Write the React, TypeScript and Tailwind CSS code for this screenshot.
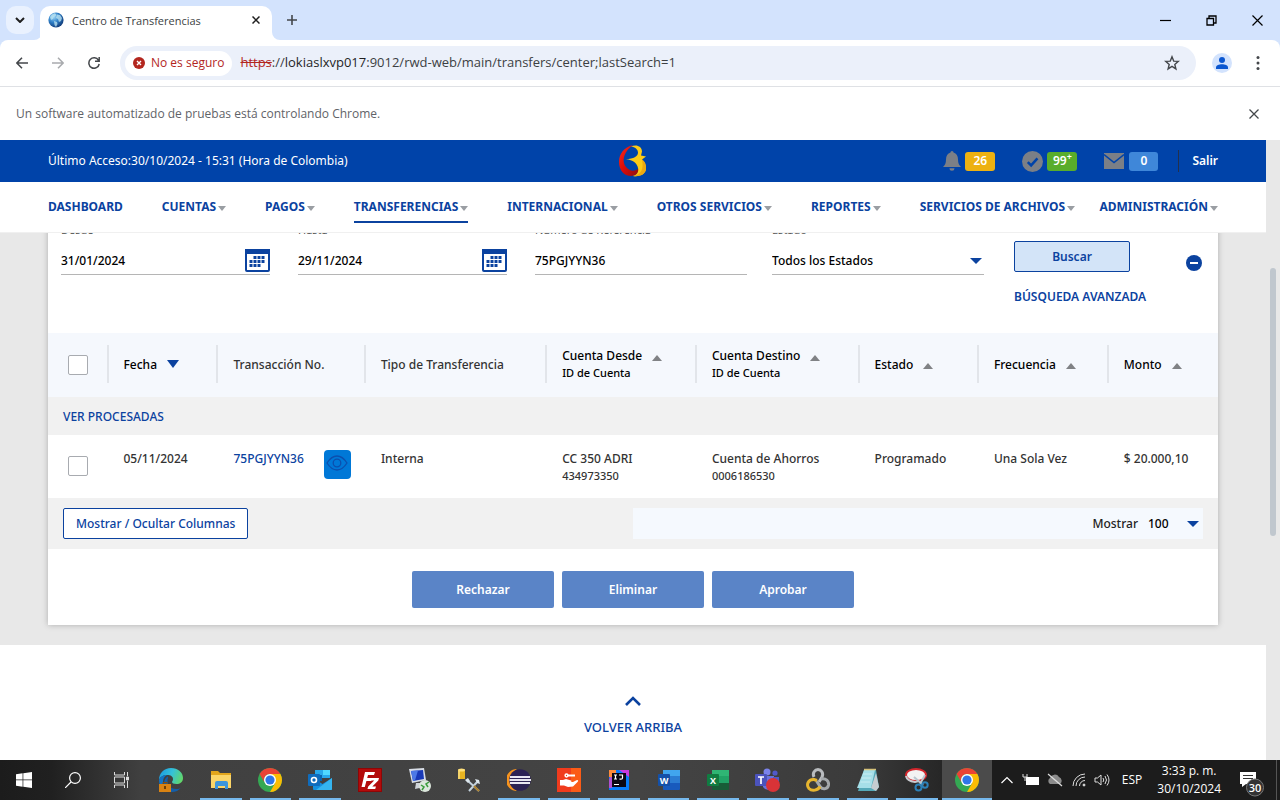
import type { ReactNode } from "react";

const navItems = ["CUENTAS", "PAGOS", "TRANSFERENCIAS", "INTERNACIONAL", "OTROS SERVICIOS", "REPORTES", "SERVICIOS DE ARCHIVOS"];

function Triangle({ up = false, className }: { up?: boolean; className: string }) {
  return (
    <svg viewBox="0 0 10 6" preserveAspectRatio="none" className={className} fill="currentColor" aria-hidden="true">
      <path d={up ? "M0 6 5 0l5 6z" : "M0 0h10L5 6z"} />
    </svg>
  );
}

function GlobeIcon() {
  return (
    <svg viewBox="0 0 16 16" className="size-4" aria-hidden="true">
      <defs>
        <radialGradient id="globe" cx="0.35" cy="0.3" r="0.8">
          <stop offset="0" stopColor="#9fd8f7" />
          <stop offset="0.45" stopColor="#2f80c8" />
          <stop offset="1" stopColor="#0c2f6b" />
        </radialGradient>
      </defs>
      <circle cx="8" cy="8" r="7.6" fill="url(#globe)" />
      <path d="M2 5c1-2 3-3.600 5-3.800L8.500 3 7 4.500 5.500 5 5 7 3 8zM9 2.500l3 .5 2 3-1 3-2 1-1-3-2-1zM6 9l3 1 .5 2L8 15l-1.500-2z" fill="#bfe5f2" opacity=".75" />
    </svg>
  );
}

function ChromeLogo() {
  return (
    <svg viewBox="0 0 24 24" className="size-6" aria-hidden="true">
      <circle cx="12" cy="12" r="12" fill="#34a853" />
      <path d="M12 6H22.390A12 12 0 0 1 12 24l5.200-9z" fill="#fbbc04" />
      <path d="M1.610 6A12 12 0 0 1 22.390 6H12a6 6 0 0 0-5.200 9z" fill="#ea4335" />
      <circle cx="12" cy="12" r="6" fill="#fff" />
      <circle cx="12" cy="12" r="4.600" fill="#2f76e8" />
    </svg>
  );
}

function OfficeLogo({ letter, tones }: { letter: string; tones: [string, string, string, string] }) {
  return (
    <svg viewBox="0 0 24 24" className="size-6" aria-hidden="true">
      <path d="M6 2h17v6H6z" fill={tones[0]} />
      <path d="M6 8h17v7H6z" fill={tones[1]} />
      <path d="M6 15h17v6a1 1 0 0 1-1 1H7a1 1 0 0 1-1-1z" fill={tones[2]} />
      <rect x="1" y="6" width="12" height="12" rx="1" fill={tones[3]} />
      <text x="7" y="15.500" textAnchor="middle" fontFamily="Open Sans" fontWeight="700" fontSize="9" fill="#fff">{letter}</text>
    </svg>
  );
}

const iconEdge = (
  <svg viewBox="0 0 24 24" className="size-6" aria-hidden="true">
    <defs>
      <linearGradient id="edgeTop" x1="0" x2="1" y1="0.300" y2="0.600">
        <stop offset="0" stopColor="#1b9de2" />
        <stop offset="0.500" stopColor="#35c1d8" />
        <stop offset="1" stopColor="#62d769" />
      </linearGradient>
    </defs>
    <path d="M0 12C0 5 5 0 12 0s12 4.500 12 10c0 4-3 6-6.500 6-3 0-4.500-1-4.500-2 0-.8 1-1 1-3 0-2.500-2.500-4-5.500-4C4 7 1 9 0 12z" fill="url(#edgeTop)" />
    <path d="M0 12c1-3 4-5 8-5-3 1.500-4 4-4 7 0 5 4 9 9 9.500C5 25 0 19 0 12z" fill="#1272c4" />
    <path d="M8.500 13c0 5 4 8 8.500 8 2 0 4-.5 5-1.500-2 3-5.500 4.500-9 4.500-5 0-8-4-8-8 0-3 1-6 3.500-7.500C10 9 8.500 10.500 8.500 13z" fill="#145ea8" />
    <rect x="0" y="16" width="12" height="8" fill="#d98313" />
    <path d="M4 16v-1.500h4V16" fill="none" stroke="#8a4f06" />
    <rect x="5" y="18" width="2" height="3" fill="#6e3f06" />
  </svg>
);

const iconFolder = (
  <svg viewBox="0 0 24 24" className="size-6" aria-hidden="true">
    <path d="M2 3h7l2 2h11v4H2z" fill="#e2a51c" />
    <path d="M2 7h20v13H2z" fill="#fbd568" />
    <path d="M6 21v-6a2 2 0 0 1 2-2h9a2 2 0 0 1 2 2v6h-3v-3H9v3z" fill="#3d96dc" />
  </svg>
);

const iconOutlook = (
  <svg viewBox="0 0 24 24" className="size-6" aria-hidden="true">
    <path d="M7 2h15v8H7z" fill="#28a8ea" />
    <path d="M15 2h7v5h-7z" fill="#50d9ff" />
    <path d="M7 7h7v6H7z" fill="#0a64ad" />
    <path d="M5 10l9.500 6L24 10v11a1 1 0 0 1-1 1H6a1 1 0 0 1-1-1z" fill="#1490df" />
    <path d="M24 10v11a1 1 0 0 1-1 1H8z" fill="#35b5f0" />
    <rect y="6" width="12" height="12" rx="1" fill="#0f6cbd" />
    <circle cx="6" cy="12" r="2.500" fill="none" stroke="#fff" strokeWidth="1.600" />
  </svg>
);

const iconFileZilla = (
  <svg viewBox="0 0 24 24" className="size-6" aria-hidden="true">
    <rect width="24" height="24" fill="#b30b0b" />
    <rect x=".5" y=".5" width="23" height="23" fill="none" stroke="#8e0606" />
    <path d="M7 4h10l-1 3h-6l-.8 3H14l-.8 3H8.400l-1.600 6H3.500z" fill="#fff" />
    <path d="M12 10h9l-.7 2.500-6 6H18l-.8 2.500H9.500l.7-2.500 6-6H11.500z" fill="#fff" />
  </svg>
);

const iconRemote = (
  <svg viewBox="0 0 24 24" className="size-6" aria-hidden="true">
    <path d="M1 1l15-1 2 12-14 3z" fill="#d8dde6" />
    <path d="M3 3l12-1 1 9-11 2z" fill="#1939b7" />
    <path d="M3 3l7-.6L7 12.600 5 13z" fill="#4d79e6" />
    <path d="M8 15h5l3 4-9 2z" fill="#cfd4d9" />
    <circle cx="17" cy="18" r="6" fill="#dce6dc" />
    <path d="m13 17 3 2-2 3M21 14l-3 2 2 3" fill="none" stroke="#3b9c3b" strokeWidth="1.500" />
  </svg>
);

const iconTools = (
  <svg viewBox="0 0 24 24" className="size-6" aria-hidden="true">
    <path d="M1 2h7v9H1z" fill="#e8b421" />
    <ellipse cx="4.500" cy="2" rx="3.500" ry="1.500" fill="#ffe07a" />
    <path d="M2 3v8" stroke="#fff0b0" />
    <path d="m10 12 12 11M12 23l9-10" stroke="#c4d2dc" strokeWidth="2" />
    <path d="M8 12l3-2 2 3-2 2zM18 11l4 1 1 4-3-1z" fill="#dce6ec" />
    <path d="m17 18 5 5" stroke="#a97f2c" strokeWidth="2" />
  </svg>
);

const iconEclipse = (
  <svg viewBox="0 0 24 24" className="size-6" aria-hidden="true">
    <path d="M10 1a11 11 0 0 0 0 22A13 13 0 0 1 10 1z" fill="#f7941e" />
    <circle cx="13" cy="12" r="10.800" fill="#2c2255" />
    <path d="M3 9h20M2.500 12h21.500M3 15h20" stroke="#e8e6f2" strokeWidth="1.900" />
  </svg>
);

const iconKeyHand = (
  <svg viewBox="0 0 24 24" className="size-6" aria-hidden="true">
    <rect width="24" height="24" fill="#f03b1d" />
    <path d="M14 0h10v24H14z" fill="#fb5b16" />
    <circle cx="9.500" cy="7.500" r="1.400" fill="none" stroke="#fff" strokeWidth="1.500" />
    <path d="M11 7.500h7" fill="none" stroke="#fff" strokeWidth="2" />
    <path d="M3 12h3l3-1 5 1.500c1 .5.500 1.500-.5 1.500H11h5l4-2c1.500 0 1.500 1 .5 2L16 18.500l-5 .5-4-1.500H3z" fill="#fff" />
  </svg>
);

const iconIdea = (
  <svg viewBox="0 0 24 24" className="size-6" aria-hidden="true">
    <path d="M2 2h20v20H2z" fill="#087cfa" />
    <path d="M2 12l3-9 8 3-8 14H2z" fill="#b04fd0" />
    <path d="M2 2h7v7H2z" fill="#fe8a3c" />
    <path d="M12 2h10v7z" fill="#c83be0" />
    <rect x="5" y="5" width="14" height="14" fill="#0b0713" />
    <path d="M7 7h3M8.500 7v4M7 11h3M12 7h3.500v3q0 1.200-1.500 1.200h-1.500" fill="none" stroke="#fff" strokeWidth="1.200" />
    <path d="M7 16.500h5" stroke="#fff" />
  </svg>
);

const iconTeams = (
  <svg viewBox="0 0 26 24" className="h-6 w-7" aria-hidden="true">
    <circle cx="12" cy="4" r="3.500" fill="#7b83eb" />
    <circle cx="20" cy="5" r="2.600" fill="#5059c9" />
    <path d="M7 8h12v8a6 6 0 0 1-11 3z" fill="#6a72de" />
    <path d="M18 9h6v7a4 4 0 0 1-6 3z" fill="#5059c9" />
    <rect y="6" width="12" height="12" rx="1" fill="#4b53bc" />
    <path d="M3 9h6M6 9v7" stroke="#fff" strokeWidth="1.700" />
    <circle cx="18" cy="17" r="7" fill="#d93337" />
  </svg>
);

const iconKnot = (
  <svg viewBox="0 0 24 24" className="size-6" aria-hidden="true">
    <g fill="none" strokeWidth="3">
      <path d="M8 9C6 5 9 1.500 12 1.500S18 5 16 9l-3 5" stroke="#b9bcbf" />
      <path d="M15 11c5-1 8 2 7.500 6-.6 4-5.500 5-8 2l-4-6" stroke="#a4a8ab" />
      <path d="M14 18.500c-2 4-8 5-11 2C0 17 2 11 8 11.500l3 1" stroke="#e7b52f" />
    </g>
  </svg>
);

const iconNotebook = (
  <svg viewBox="0 0 24 24" className="size-6" aria-hidden="true">
    <path d="M8 2h12l3 17-3 4H2z" fill="#55a9b8" />
    <path d="M8 2h11L15 20H1z" fill="#a6dfe8" />
    <path d="M7 6h9M6 10h9M4.500 14H14" stroke="#c9edf2" />
    <path d="m15 20 5-15 3 14-3 4z" fill="#c6ccd0" />
    <path d="M8 1.500h12" stroke="#d7c37b" strokeWidth="1.500" />
  </svg>
);

const iconSnip = (
  <svg viewBox="0 0 24 24" className="size-6" aria-hidden="true">
    <ellipse cx="11" cy="7" rx="10" ry="6" fill="#f3f3f3" stroke="#d4262c" strokeWidth="2" />
    <path d="M1 8q1 5 9 6l4-1" fill="none" stroke="#c9cbd0" strokeWidth="2" />
    <path d="m9 9 9 8M20 7l-5 9" stroke="#b9c7d0" strokeWidth="2" />
    <circle cx="13.500" cy="19.500" r="3" fill="none" stroke="#2c80b8" strokeWidth="2" />
    <circle cx="20" cy="17" r="2.700" fill="none" stroke="#2c80b8" strokeWidth="2" />
  </svg>
);

const apps: { name: string; icon: ReactNode; open?: boolean; active?: boolean }[] = [
  { name: "Edge", icon: iconEdge },
  { name: "Explorador", icon: iconFolder, open: true },
  { name: "Chrome", icon: <ChromeLogo />, open: true },
  { name: "Outlook", icon: iconOutlook, open: true },
  { name: "FileZilla", icon: iconFileZilla },
  { name: "Escritorio remoto", icon: iconRemote },
  { name: "Base de datos", icon: iconTools },
  { name: "Eclipse", icon: iconEclipse, open: true },
  { name: "Llaves", icon: iconKeyHand, open: true },
  { name: "IntelliJ", icon: iconIdea, open: true },
  { name: "Word", icon: <OfficeLogo letter="W" tones={["#41a5ee", "#2b7cd3", "#185abd", "#1450a8"]} />, open: true },
  { name: "Excel", icon: <OfficeLogo letter="X" tones={["#2fb574", "#21a366", "#185c37", "#107c41"]} />, open: true },
  { name: "Teams", icon: iconTeams, open: true },
  { name: "Conexiones", icon: iconKnot, open: true },
  { name: "Bloc de notas", icon: iconNotebook, open: true },
  { name: "Recortes", icon: iconSnip, open: true },
  { name: "Chrome activo", icon: <ChromeLogo />, open: true, active: true },
];

function BrowserChrome() {
  return (
    <div className="shrink-0 bg-[#d3e3fd] font-['Open_Sans',sans-serif]">
      <div className="flex h-10 items-end">
        <button aria-label="Buscar pestañas" className="mb-1.5 ml-1.5 flex size-7 items-center justify-center rounded-[10px] bg-[#e9f1fe]">
          <svg viewBox="0 0 10 6" className="h-1.5 w-2.5" fill="none" stroke="#1f1f1f" strokeWidth="2"><path d="m1 1 4 4 4-4" /></svg>
        </button>
        <svg viewBox="0 0 8 8" className="size-2" fill="#fff" aria-hidden="true"><path d="M8 0v8H0a8 8 0 0 0 8-8z" /></svg>
        <div className="-ml-0.5 flex h-[34px] w-[232px] items-center rounded-t-[10px] bg-white pr-2.5 pb-1.5 pl-2">
          <GlobeIcon />
          <span className="mt-0.5 ml-2 flex-1 text-[11px] text-[#3c3f43]">Centro de Transferencias</span>
          <button aria-label="Cerrar pestaña" className="p-0.5">
            <svg viewBox="0 0 8 8" className="size-2" stroke="#1f1f1f" strokeWidth="1.500"><path d="m.5.5 7 7m0-7-7 7" /></svg>
          </button>
        </div>
        <svg viewBox="0 0 8 8" className="size-2" fill="#fff" aria-hidden="true"><path d="M0 0v8h8a8 8 0 0 1-8-8z" /></svg>
        <button aria-label="Nueva pestaña" className="mb-3.5 ml-1.5 p-px">
          <svg viewBox="0 0 10 10" className="size-2.5" stroke="#44474b" strokeWidth="1.600"><path d="M5 0v10M0 5h10" /></svg>
        </button>
        <div className="mb-3.5 mr-[17px] ml-auto flex items-center gap-[35px]">
          <button aria-label="Minimizar"><svg viewBox="0 0 11 11" className="size-[11px]" stroke="#000" strokeWidth="1.200"><path d="M0 5.500h11" /></svg></button>
          <button aria-label="Restaurar"><svg viewBox="0 0 11 11" className="size-[11px]" fill="none" stroke="#000" strokeWidth="1.300"><path d="M1 3.500h6.500V10H1zM3 3.500V1h7v7H7.500" /></svg></button>
          <button aria-label="Cerrar"><svg viewBox="0 0 11 11" className="size-[11px]" stroke="#000" strokeWidth="1.200"><path d="m.5.5 10 10m0-10-10 10" /></svg></button>
        </div>
      </div>

      <div className="flex h-[47px] items-center rounded-t-lg border-b border-[#dfe1e5] bg-white pr-5 pl-4">
        <button aria-label="Atrás"><svg viewBox="0 0 12 12" className="size-3" fill="none" stroke="#44474b" strokeWidth="1.500"><path d="M12 6H1m5-5.300L.9 6 6 11.300" /></svg></button>
        <button aria-label="Adelante" className="ml-6"><svg viewBox="0 0 12 12" className="size-3" fill="none" stroke="#a9abae" strokeWidth="1.500"><path d="M0 6h11M6 .7 11.100 6 6 11.300" /></svg></button>
        <button aria-label="Recargar" className="ml-6">
          <svg viewBox="0 0 12 12" className="size-3" fill="none" stroke="#44474b" strokeWidth="1.500"><path d="M10.500 3.300A5.200 5.200 0 1 0 11.200 7M11.200 0v4.200H7" /></svg>
        </button>
        <div className="ml-5 flex h-[34px] flex-1 items-center rounded-full bg-[#ebf0fa] pr-4 pl-[5px]">
          <button className="flex h-[25px] items-center gap-1.5 rounded-full bg-white pr-2 pl-2 text-xs font-medium text-[#b3261e]">
            <svg viewBox="0 0 12 12" className="size-3"><circle cx="6" cy="6" r="6" fill="#b3261e" /><path d="m4 4 4 4m0-4L4 8" stroke="#fff" strokeWidth="1.400" /></svg>
            No es seguro
          </button>
          <div className="ml-2 flex-1 text-[13px] text-[#3c4043]">
            <span className="text-[#b3261e] line-through">https</span>://<span className="text-[#1f1f1f]">lokiaslxvp017</span>:9012/rwd-web/main/transfers/center;lastSearch=1
          </div>
          <button aria-label="Agregar a favoritos">
            <svg viewBox="0 0 16 16" className="size-4" fill="none" stroke="#44474b" strokeWidth="1.400"><path d="m8 1.800 1.700 4.300 4.600.3-3.500 3 1.100 4.500L8 11.400l-3.900 2.500 1.100-4.500-3.500-3 4.600-.3z" /></svg>
          </button>
        </div>
        <button aria-label="Perfil" className="ml-4">
          <svg viewBox="0 0 20 20" className="size-5" fill="#0b57d0"><circle cx="10" cy="10" r="10" fill="#d3e3fd" /><circle cx="10" cy="7" r="3" /><path d="M4 16v-1.500C4 12 7 11.200 10 11.200s6 .8 6 3.300V16z" /></svg>
        </button>
        <button aria-label="Menú" className="ml-6">
          <svg viewBox="0 0 4 14" className="h-3.5 w-1" fill="#44474b"><circle cx="2" cy="1.600" r="1.500" /><circle cx="2" cy="7" r="1.500" /><circle cx="2" cy="12.400" r="1.500" /></svg>
        </button>
      </div>

      <div className="flex h-[53px] items-center justify-between bg-white pr-[21px] pl-4 text-xs text-[#5f6368]">
        <span>Un software automatizado de pruebas está controlando Chrome.</span>
        <button aria-label="Cerrar aviso"><svg viewBox="0 0 10 10" className="size-2.5" stroke="#44474b" strokeWidth="1.300"><path d="m.5.5 9 9m0-9-9 9" /></svg></button>
      </div>
    </div>
  );
}

function BirdLogo() {
  return (
    <svg viewBox="0 0 28 32" className="h-8 w-7" aria-label="Logo">
      <defs>
        <linearGradient id="crescent" x1="0" x2="1" y1="0" y2="1">
          <stop offset="0" stopColor="#ff2a18" />
          <stop offset="0.500" stopColor="#d90b0b" />
          <stop offset="1" stopColor="#8a1212" />
        </linearGradient>
      </defs>
      <path d="M14 0C5 2 0 9 0 17c0 8 5 14 12 14 5 0 8-3 8-8-3 3-7 3.500-10 1.500-5-3-6.500-8.500-4.500-14C7 6 10 3 14 0z" fill="url(#crescent)" />
      <path d="M12 1.500c5-2.500 11-.5 11 5l-1 4 5 1-4 3c3 2 4 5 4 9 0 5-5 8.500-13 7.500 4-1 6-4 5-8-1-5-5-8-12-9 7.500 0 12-2.500 12-6.500 0-3-3-5.500-7-6z" fill="#fdcb16" />
      <path d="M23 14.500c3 2 4 5 4 9 0 5-5 8.500-13 7.500 8-1 11-7 9-16.500z" fill="#eda80f" />
    </svg>
  );
}

function PageHeader() {
  return (
    <div className="relative z-10">
      <header className="grid h-[42px] grid-cols-[1fr_auto_1fr] items-center bg-[#0043a9] px-12 text-xs font-medium text-white">
        <p className="font-normal">Último Acceso:30/10/2024 - 15:31 (Hora de Colombia)</p>
        <BirdLogo />
        <div className="flex items-center justify-end">
          <a href="#alertas" className="flex items-center gap-1">
            <svg viewBox="0 0 18 20" className="h-5 w-[18px]" fill="#7b7f86"><path d="M9 0c1 0 1.500.8 1.500 1.600C13.500 2.300 15 5 15 8.500c0 4 1 5.500 3 7.500H0c2-2 3-3.500 3-7.500 0-3.500 1.500-6.200 4.500-6.900C7.500.8 8 0 9 0zM6.500 17.300h5a2.500 2.500 0 0 1-5 0z" /></svg>
            <span className="flex h-[19px] w-[30px] items-center justify-center rounded-[3px] bg-[#edb111] font-semibold">26</span>
          </a>
          <a href="#aprobaciones" className="ml-[27px] flex items-center gap-1">
            <svg viewBox="0 0 20 20" className="size-[21px]"><circle cx="10" cy="10" r="10" fill="#7b7f86" /><path d="m5.500 10.500 3.200 3.200 6-6.700" fill="none" stroke="#0043a9" strokeWidth="2.400" /></svg>
            <span className="flex h-[19px] w-[30px] items-center justify-center rounded-[3px] bg-[#59ad2b] font-semibold">99<sup className="text-[9px]">+</sup></span>
          </a>
          <a href="#mensajes" className="ml-[27px] flex items-center gap-[5px]">
            <svg viewBox="0 0 20 16" className="h-4 w-5"><path d="M0 0h20v16H0z" fill="#7b7f86" /><path d="m0 1.500 10 8 10-8" fill="none" stroke="#0043a9" strokeWidth="1.600" /></svg>
            <span className="flex h-[19px] w-[29px] items-center justify-center rounded-[3px] bg-[#3f87d9] font-semibold">0</span>
          </a>
          <a href="#salir" className="ml-5 border-l border-[#22304d] py-[3px] pl-[13px] font-semibold">Salir</a>
        </div>
      </header>
      <nav className="flex h-[51px] items-center justify-between border-b border-[#f0f0f0] bg-white px-12 text-xs font-bold text-[#0b429f]">
        <div className="flex gap-[39px]">
          <a href="#dashboard" className="border-b-2 border-transparent pt-2 pb-1.5">DASHBOARD</a>
          {navItems.map((label) => (
            <a key={label} href="#menu" className={`flex items-center gap-0.5 border-b-2 pt-2 pb-1.5 ${label === "TRANSFERENCIAS" ? "border-[#0b429f]" : "border-transparent"}`}>
              {label}
              <Triangle className="mt-0.5 h-[5px] w-2 text-[#9a9ea3]" />
            </a>
          ))}
        </div>
        <a href="#administracion" className="flex items-center gap-0.5 border-b-2 border-transparent pt-2 pb-1.5">
          ADMINISTRACIÓN
          <Triangle className="mt-0.5 h-[5px] w-2 text-[#9a9ea3]" />
        </a>
      </nav>
    </div>
  );
}

function CalendarIcon() {
  return (
    <svg viewBox="0 0 25 23" className="h-[23px] w-[25px]" aria-hidden="true">
      <rect x="1" y="1" width="23" height="21" rx="1" fill="#fff" stroke="#0b429f" strokeWidth="2" />
      <path d="M0 0h25v5H0z" fill="#0b429f" />
      <path d="M8.500 8.500h12M4.500 12.500h16M4.500 16.500h12" stroke="#0b429f" strokeWidth="3" strokeDasharray="3 1" />
    </svg>
  );
}

function TextField({ id, label, value, calendar = false }: { id: string; label: string; value: string; calendar?: boolean }) {
  return (
    <div className={calendar ? "pr-7" : "pr-[25px]"}>
      <label htmlFor={id} className="block h-5 text-[11px] leading-[18px] text-[#555]">{label}</label>
      <div className="mt-1.5 flex h-7 items-center border-b border-[#b5b5b5]">
        <input id={id} defaultValue={value} className="h-6 w-0 flex-1 bg-transparent text-xs font-medium text-black outline-none" />
        {calendar && <button aria-label={`Calendario ${label}`}><CalendarIcon /></button>}
      </div>
    </div>
  );
}

function Filters() {
  return (
    <form className="grid h-28 grid-cols-[237fr_237fr_237fr_242fr_168fr_20fr] pr-4 pl-[13px]" onSubmit={(e) => e.preventDefault()}>
      <TextField id="desde" label="Desde" value="31/01/2024" calendar />
      <TextField id="hasta" label="Hasta" value="29/11/2024" calendar />
      <TextField id="referencia" label="Número de Referencia" value="75PGJYYN36" />
      <div className="pr-[30px]">
        <label htmlFor="estado" className="block h-5 text-[11px] leading-[18px] text-[#555]">Estado</label>
        <div className="mt-1.5 grid h-7 items-center border-b border-[#b5b5b5]">
          <select id="estado" className="col-start-1 row-start-1 h-6 appearance-none bg-transparent text-xs font-medium text-black outline-none">
            <option>Todos los Estados</option>
          </select>
          <Triangle className="pointer-events-none col-start-1 row-start-1 mr-0.5 h-1.5 w-3 justify-self-end text-[#0b429f]" />
        </div>
      </div>
      <div className="flex flex-col items-start gap-[17px] pt-5">
        <button className="h-[31px] w-[116px] rounded-[2px] border border-[#0b429f] bg-[#d3e4f8] text-xs font-semibold text-[#0b429f]">Buscar</button>
        <a href="#avanzada" className="text-xs font-semibold whitespace-nowrap text-[#0b429f]">BÚSQUEDA AVANZADA</a>
      </div>
      <button aria-label="Contraer" className="mt-[34px] size-4 justify-self-end">
        <svg viewBox="0 0 16 16" className="size-4"><circle cx="8" cy="8" r="8" fill="#0b429f" /><path d="M4 8h8" stroke="#fff" strokeWidth="2" /></svg>
      </button>
    </form>
  );
}

const boxClass = "block size-5 appearance-none rounded-[2px] border border-[#a8abb0] bg-white";

function HeadCell({ label, sub, sort, plain = false }: { label: string; sub?: string; sort?: "up" | "down"; plain?: boolean }) {
  return (
    <th className="p-0 pb-0.5 text-left font-medium">
      <div className={`flex h-[38px] flex-col justify-center border-l-2 border-[#e2e5ea] pl-[15px] text-xs leading-[17px] whitespace-nowrap ${plain ? "text-[#333]" : "text-black"}`}>
        <span className="flex items-center">
          {label}
          {sort === "down" && <Triangle className="ml-2.5 h-2 w-3 text-[#0b429f]" />}
          {sort === "up" && <Triangle up className="mt-1 ml-2.5 h-1.5 w-2.5 text-[#808285]" />}
        </span>
        {sub && <span className="text-[11px]">{sub}</span>}
      </div>
    </th>
  );
}

function TransfersTable() {
  const cell = "pt-[15px] pb-3.5 pl-[17px] pr-0 text-left align-top font-medium";
  return (
    <table className="w-full table-fixed border-collapse text-xs leading-[17px] text-[#333]">
      <colgroup>
        <col className="w-[5%]" />
        <col className="w-[9.4%]" />
        <col className="w-[12.600%]" />
        <col className="w-[15.500%]" />
        <col className="w-[12.800%]" />
        <col className="w-[13.900%]" />
        <col className="w-[10.200%]" />
        <col className="w-[11.100%]" />
        <col className="w-[9.500%]" />
      </colgroup>
      <thead>
        <tr className="h-16 bg-[#f5f8fd]">
          <th className="p-0 pl-5"><input type="checkbox" aria-label="Seleccionar todas" className={boxClass} /></th>
          <HeadCell label="Fecha" sort="down" />
          <HeadCell label="Transacción No." plain />
          <HeadCell label="Tipo de Transferencia" plain />
          <HeadCell label="Cuenta Desde" sub="ID de Cuenta" sort="up" />
          <HeadCell label="Cuenta Destino" sub="ID de Cuenta" sort="up" />
          <HeadCell label="Estado" sort="up" />
          <HeadCell label="Frecuencia" sort="up" />
          <HeadCell label="Monto" sort="up" />
        </tr>
      </thead>
      <tbody>
        <tr className="h-[38px] bg-[#f1f1f1]">
          <td colSpan={9} className="p-0 pl-[15px] font-medium"><a href="#procesadas" className="text-[#0b429f]">VER PROCESADAS</a></td>
        </tr>
        <tr className="h-[63px]">
          <td className="p-0 pb-0.5 pl-5"><input type="checkbox" aria-label="Seleccionar 75PGJYYN36" className={boxClass} /></td>
          <td className={cell}>05/11/2024</td>
          <td className={cell}>
            <div className="flex justify-between pr-[13px]">
              <a href="#transaccion" className="text-[#0b429f]">75PGJYYN36</a>
              <button aria-label="Ver detalle" className="-mb-4 flex h-[29px] w-[27px] items-center justify-center rounded bg-[#0078d7] pb-1">
                <svg viewBox="0 0 22 16" className="h-4 w-[22px]" fill="none" stroke="#0b4fae" strokeWidth="1.300"><path d="M1 8q4.500-7 10-7t10 7q-4.500 7-10 7T1 8z" /><circle cx="11" cy="8" r="3.800" /></svg>
              </button>
            </div>
          </td>
          <td className={cell}>Interna</td>
          <td className={cell}>CC 350 ADRI<br /><span className="text-[11px]">434973350</span></td>
          <td className={cell}>Cuenta de Ahorros<br /><span className="text-[11px]">0006186530</span></td>
          <td className={cell}>Programado</td>
          <td className={cell}>Una Sola Vez</td>
          <td className={cell}>$ 20.000,10</td>
        </tr>
      </tbody>
    </table>
  );
}

function BankPage() {
  return (
    <main className="flex min-h-0 flex-1 overflow-hidden bg-[#e8e8e8] font-['Noto_Sans',sans-serif]">
      <div className="flex min-w-0 flex-1 flex-col">
        <PageHeader />
        <div className="relative -mt-3 px-12 pb-5">
          <section className="bg-white shadow-[0_0_6px_rgba(0,0,0,0.250)]">
            <Filters />
            <TransfersTable />
            <div className="flex h-[51px] items-center justify-between bg-[#f1f1f1] px-[15px] text-xs font-medium">
              <button className="h-[31px] rounded-[2px] border border-[#0b429f] bg-white px-3 text-[#0b429f]">Mostrar / Ocultar Columnas</button>
              <div className="flex h-[31px] w-1/2 items-center justify-end bg-[#f5f9fe] text-[#222]">
                <label htmlFor="mostrar">Mostrar</label>
                <div className="ml-2.5 grid w-[55px] items-center">
                  <select id="mostrar" className="col-start-1 row-start-1 appearance-none bg-transparent text-black outline-none"><option>100</option></select>
                  <Triangle className="pointer-events-none col-start-1 row-start-1 mr-1 h-1.5 w-3 justify-self-end text-[#0b429f]" />
                </div>
              </div>
            </div>
            <div className="flex justify-center gap-2 pt-[22px] pb-[17px] text-xs font-semibold text-white">
              <button className="h-[37px] w-[142px] rounded-[2px] bg-[#5a84c7]">Rechazar</button>
              <button className="h-[37px] w-[142px] rounded-[2px] bg-[#5a84c7]">Eliminar</button>
              <button className="h-[37px] w-[142px] rounded-[2px] bg-[#5a84c7]">Aprobar</button>
            </div>
          </section>
        </div>
        <footer className="flex flex-1 justify-center bg-white pt-[51px]">
          <a href="#arriba" className="flex flex-col items-center gap-3 text-[13px] font-medium text-[#0b429f]">
            <svg viewBox="0 0 16 10" className="h-2.5 w-4" fill="none" stroke="#0b429f" strokeWidth="2.600"><path d="m1 9 7-7 7 7" /></svg>
            VOLVER ARRIBA
          </a>
        </footer>
      </div>
      <div className="w-3.5 shrink-0 bg-[#e8e8e8] pt-32 pl-1">
        <div className="h-[268px] w-1.5 rounded-full bg-[#c0c7ce]" />
      </div>
    </main>
  );
}

function Taskbar() {
  return (
    <div className="flex h-10 shrink-0 items-stretch bg-[linear-gradient(90deg,#1c1c1c_0%,#202020_4%,#404040_11%,#444_50%,#3b3b3b_67%,#1c1c1c_77%)] font-['Open_Sans',sans-serif] text-white">
      <div className="flex w-[146px] *:flex *:flex-1 *:items-center *:justify-center">
        <button aria-label="Inicio"><svg viewBox="0 0 16 16" className="size-4" fill="#fff"><path d="M0 2.200 6.600 1.300v6.300H0zM7.300 1.200 16 0v7.600H7.300zM0 8.300h6.600v6.400L0 13.800zM7.300 8.300H16V16l-8.700-1.200z" /></svg></button>
        <button aria-label="Buscar"><svg viewBox="0 0 16 16" className="size-4" fill="none" stroke="#fff" strokeWidth="1.200"><circle cx="10" cy="6" r="5.400" /><path d="m6 10-6 6" /></svg></button>
        <button aria-label="Vista de tareas"><svg viewBox="0 0 16 16" className="size-4" fill="none" stroke="#ddd"><path d="M.5 0v3h10V0M.5 16v-3h10v3M.5 5h10v6H.5zM13.500 0v4m0 5v7" /><path d="M12.500 5h2v3h-2z" fill="#ddd" /></svg></button>
      </div>
      <div className="grid w-[846px] grid-cols-17">
        {apps.map((app) => (
          <button key={app.name} aria-label={app.name} className={`flex flex-col items-center justify-between pt-2 ${app.active ? "bg-[#4b4b4b]" : "px-1"}`}>
            {app.icon}
            <span className={`h-0.5 w-full ${app.open ? "bg-[#76b9ed]" : ""}`} />
          </button>
        ))}
      </div>
      <div className="ml-auto flex items-center">
        <svg viewBox="0 0 12 8" className="h-2 w-3" fill="none" stroke="#fff" strokeWidth="1.200" aria-hidden="true"><path d="m.5 7 5.500-5.500L11.500 7" /></svg>
        <svg viewBox="0 0 18 14" className="ml-[9px] h-3.5 w-[18px]" aria-hidden="true"><path d="M4 4h13v8H4z" fill="#fff" /><path d="M1 1v3h4V1M3 4v4" fill="none" stroke="#ddd" /></svg>
        <svg viewBox="0 0 18 14" className="ml-1.5 h-3.5 w-[18px]" aria-hidden="true"><path d="M4 11a3.500 3.500 0 0 1 0-6 5 5 0 0 1 9-1 4 4 0 0 1 1 7z" fill="#8b8b8b" /><path d="m2 1 14 12" stroke="#ddd" strokeWidth="1.200" /></svg>
        <svg viewBox="0 0 14 14" className="ml-2 size-3.5" fill="none" stroke="#ddd" aria-hidden="true"><path d="M1 13A12 12 0 0 1 13 1M4 13a9 9 0 0 1 9-9M7.500 13A5.500 5.500 0 0 1 13 7.500" /><circle cx="12" cy="12" r="1" fill="#ddd" /></svg>
        <svg viewBox="0 0 16 14" className="ml-2 h-3.5 w-4" fill="none" stroke="#ddd" aria-hidden="true"><path d="M1 5h2.500L7 2v10L3.500 9H1zM9 5q1.500 2 0 4M11 3q3 4 0 8M13 1.500q4 5.500 0 11" /></svg>
        <span className="ml-3 text-xs">ESP</span>
        <div className="ml-[15px] text-center text-xs leading-[18px]">
          <p>3:33 p. m.</p>
          <p>30/10/2024</p>
        </div>
        <button aria-label="Notificaciones" className="mt-2 ml-[18px]">
          <svg viewBox="0 0 26 26" className="size-[26px]"><path d="M1 1h16v12H7l-4 3v-3H1z" fill="#fff" /><path d="M4 4.500h10M4 7.500h10" stroke="#333" /><circle cx="16" cy="16.500" r="8.500" fill="#333" stroke="#777" /><text x="16" y="20.500" textAnchor="middle" fontFamily="Open Sans" fontWeight="600" fontSize="11" fill="#fff">30</text></svg>
        </button>
        <span className="mr-[3px] ml-[11px] h-10 w-px bg-[#555]" />
      </div>
    </div>
  );
}

export default function App() {
  return (
    <div className="flex h-screen flex-col overflow-hidden bg-white">
      <BrowserChrome />
      <BankPage />
      <Taskbar />
    </div>
  );
}
